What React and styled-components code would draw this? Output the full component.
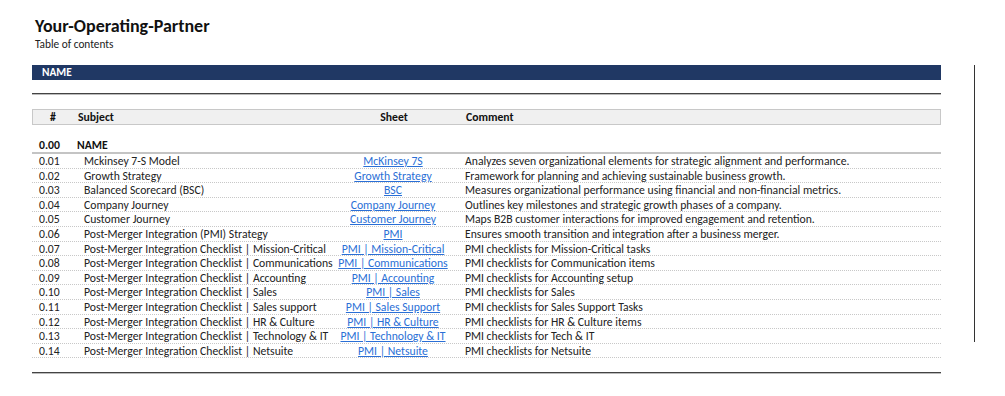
import React from 'react'
import styled, { createGlobalStyle } from 'styled-components'

const GlobalStyle = createGlobalStyle`
  html, body {
    margin: 0;
    padding: 0;
    background: #fff;
  }
  body {
    font-family: Carlito, Lato, "Liberation Sans", sans-serif;
    color: #222;
  }
`

const Page = styled.div`
  display: flex;
  align-items: flex-start;
  width: 1005px;
  height: 396px;
  overflow: hidden;
`

const Sheet = styled.div`
  width: 909px;
  margin-left: 32px;
`

const Title = styled.h1`
  margin: 15px 0 0 3px;
  font-size: 18px;
  line-height: 22px;
  font-weight: 700;
  color: #111;
`

const SubTitle = styled.div`
  margin: 1px 0 0 3px;
  font-size: 11.3px;
  line-height: 13px;
  color: #222;
`

const Banner = styled.div`
  margin-top: 14px;
  height: 15px;
  background: #203864;
  color: #fff;
  font-size: 11.3px;
  font-weight: 700;
  line-height: 15px;
  padding-left: 10px;
`

const Rule = styled.div`
  margin-top: ${p => p.$top}px;
  height: 1px;
  background: #444;
  border-bottom: 1px solid #bbb;
`

const Grid = styled.div`
  display: grid;
  grid-template-columns: 40px 265px 112px 1fr;
  align-items: center;
`

const HeadRow = styled(Grid)`
  margin-top: 14px;
  height: 14px;
  background: #f0f0f0;
  border: 1px solid #c8c8c8;
  font-size: 11.7px;
  font-weight: 700;
  color: #111;
`

const SectionRow = styled(Grid)`
  margin-top: 13px;
  height: 14px;
  font-size: 11.7px;
  font-weight: 700;
  color: #111;
  border-bottom: 2px solid #c4c4c4;
`

const Row = styled(Grid)`
  height: 13.6px;
  font-size: 11.7px;
  color: #222;
  border-bottom: 1px dotted #c8c8c8;
`

const Cell = styled.div`
  white-space: nowrap;
  line-height: 14px;
  padding-left: ${p => p.$pad || 0}px;
  text-align: ${p => p.$align || 'left'};
`

const SheetLink = styled.a`
  color: #2a6fd6;
  text-decoration: underline;
  text-underline-offset: 1px;
  cursor: pointer;
`

const PageEdge = styled.div`
  margin-left: 33px;
  margin-top: 65px;
  width: 1px;
  height: 277px;
  background: #333;
`

const rows = [
  ['0.01', 'Mckinsey 7-S Model', 'McKinsey 7S', 'Analyzes seven organizational elements for strategic alignment and performance.'],
  ['0.02', 'Growth Strategy', 'Growth Strategy', 'Framework for planning and achieving sustainable business growth.'],
  ['0.03', 'Balanced Scorecard (BSC)', 'BSC', 'Measures organizational performance using financial and non-financial metrics.'],
  ['0.04', 'Company Journey', 'Company Journey', 'Outlines key milestones and strategic growth phases of a company.'],
  ['0.05', 'Customer Journey', 'Customer Journey', 'Maps B2B customer interactions for improved engagement and retention.'],
  ['0.06', 'Post-Merger Integration (PMI) Strategy', 'PMI', 'Ensures smooth transition and integration after a business merger.'],
  ['0.07', 'Post-Merger Integration Checklist | Mission-Critical', 'PMI | Mission-Critical', 'PMI checklists for Mission-Critical tasks'],
  ['0.08', 'Post-Merger Integration Checklist | Communications', 'PMI | Communications', 'PMI checklists for Communication items'],
  ['0.09', 'Post-Merger Integration Checklist | Accounting', 'PMI | Accounting', 'PMI checklists for Accounting setup'],
  ['0.10', 'Post-Merger Integration Checklist | Sales', 'PMI | Sales', 'PMI checklists for Sales'],
  ['0.11', 'Post-Merger Integration Checklist | Sales support', 'PMI | Sales Support', 'PMI checklists for Sales Support Tasks'],
  ['0.12', 'Post-Merger Integration Checklist | HR & Culture', 'PMI | HR & Culture', 'PMI checklists for HR & Culture items'],
  ['0.13', 'Post-Merger Integration Checklist | Technology & IT', 'PMI | Technology & IT', 'PMI checklists for Tech & IT'],
  ['0.14', 'Post-Merger Integration Checklist | Netsuite', 'PMI | Netsuite', 'PMI checklists for Netsuite'],
]

export default function App() {
  return (
    <Page>
      <GlobalStyle />
      <Sheet>
        <Title>Your-Operating-Partner</Title>
        <SubTitle>Table of contents</SubTitle>
        <Banner>NAME</Banner>
        <Rule $top={13} />

        <HeadRow>
          <Cell $align="center">#</Cell>
          <Cell $pad={5}>Subject</Cell>
          <Cell $align="center">Sheet</Cell>
          <Cell $pad={16}>Comment</Cell>
        </HeadRow>

        <SectionRow>
          <Cell $pad={7}>0.00</Cell>
          <Cell $pad={5}>NAME</Cell>
          <Cell />
          <Cell />
        </SectionRow>

        {rows.map(r => (
          <Row key={r[0]}>
            <Cell $pad={7}>{r[0]}</Cell>
            <Cell $pad={12}>{r[1]}</Cell>
            <Cell $align="center"><SheetLink>{r[2]}</SheetLink></Cell>
            <Cell $pad={16}>{r[3]}</Cell>
          </Row>
        ))}

        <Rule $top={14} />
      </Sheet>
      <PageEdge />
    </Page>
  )
}
